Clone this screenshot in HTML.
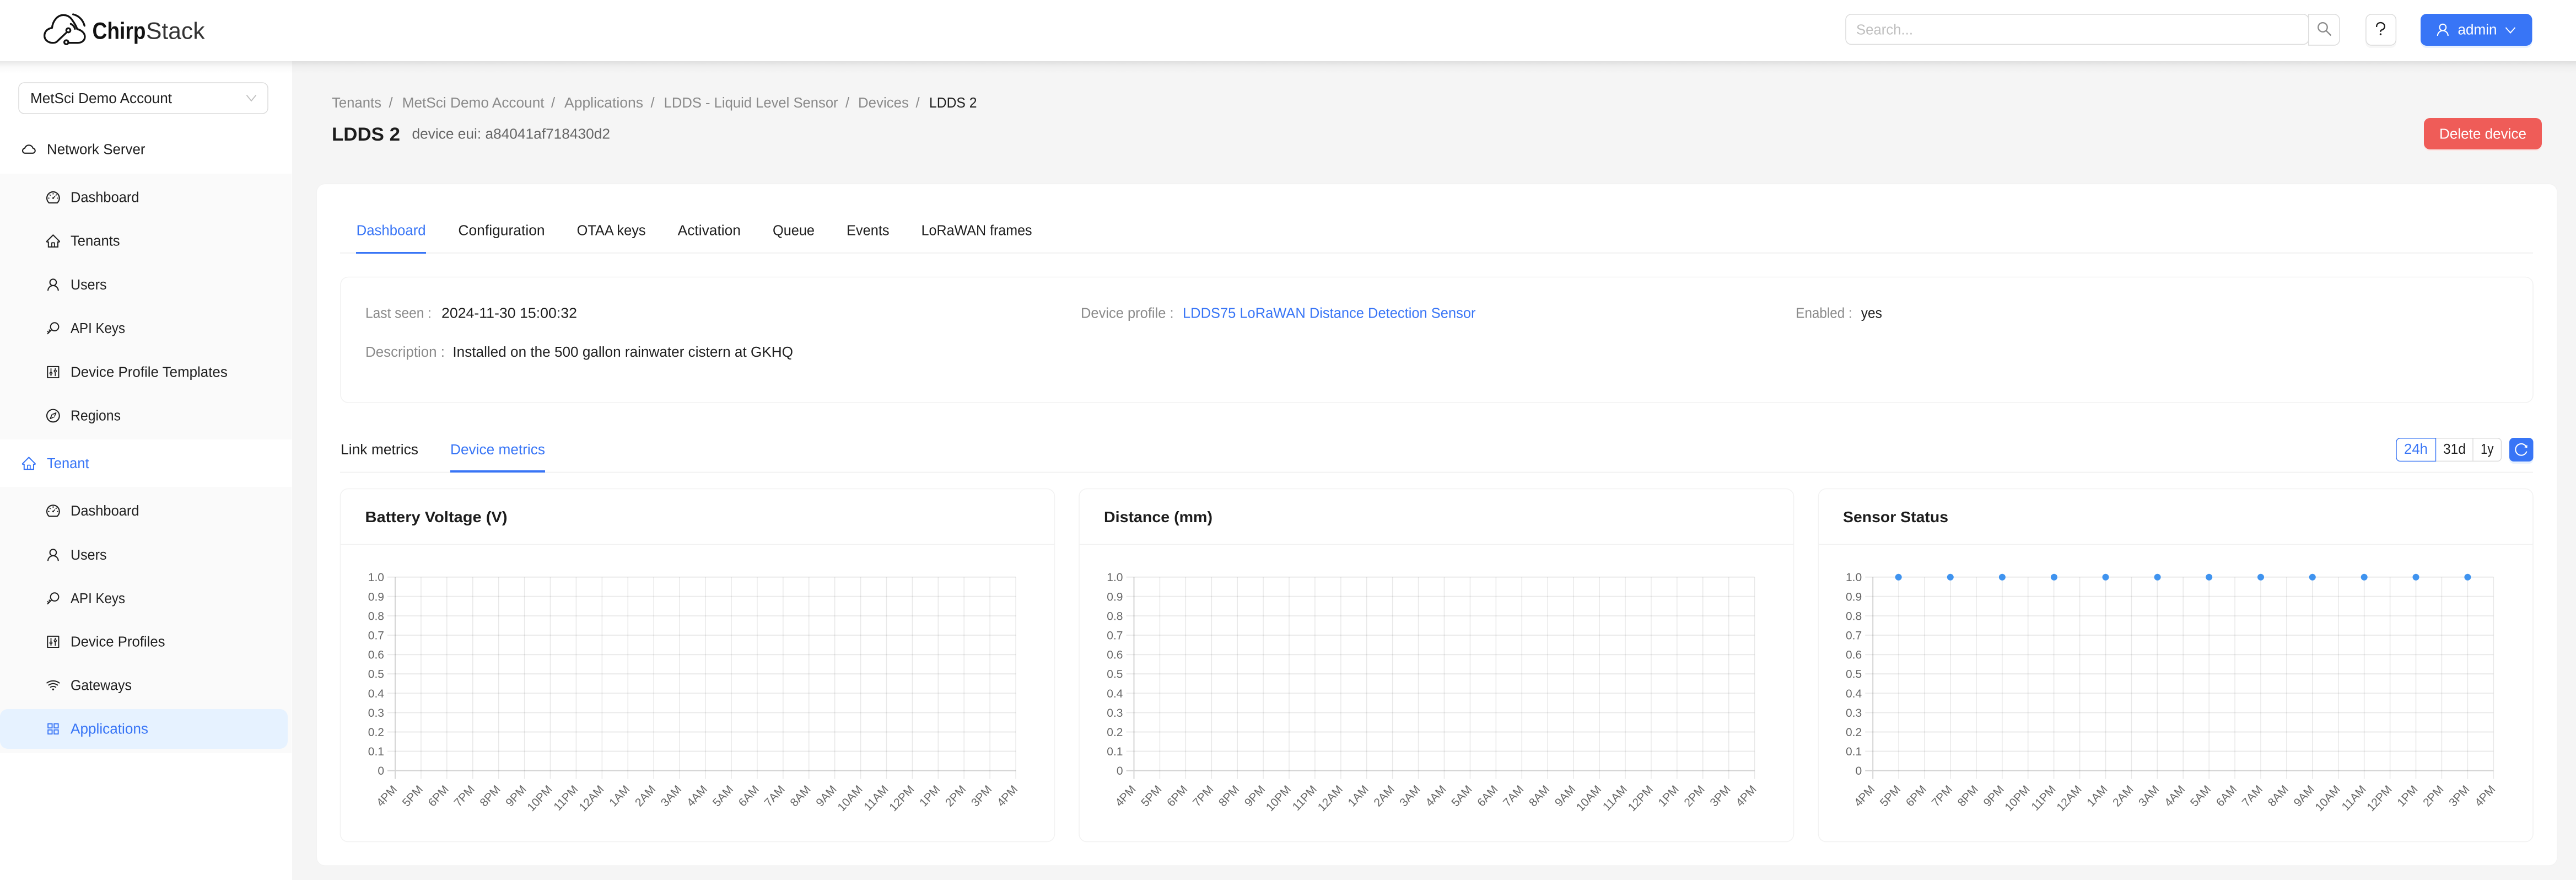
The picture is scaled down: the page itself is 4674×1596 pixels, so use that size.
<!DOCTYPE html>
<html lang="en"><head><meta charset="utf-8"><title>LDDS 2 - ChirpStack</title>
<style>
html,body{margin:0;padding:0;background:#f5f5f5;width:4674px;height:1596px;overflow:hidden}
svg{display:block;font-family:"Liberation Sans",Arial,sans-serif}
text{white-space:pre}
.m{font-size:25.5px;fill:#1f1f1f}
.b{fill:#3875f6}
.g{fill:#8a8a8a}
.d{fill:#1f1f1f}
.t{font-size:25.5px}
.h{font-size:27.5px;font-weight:700;fill:#1c1c1c}
.y{font-size:21px;fill:#666;text-anchor:end}
.x{font-size:21px;fill:#666;text-anchor:end}
</style></head><body>
<svg width="4674" height="1596" viewBox="0 0 4674 1596" xmlns="http://www.w3.org/2000/svg">
<defs>
<linearGradient id="sh" x1="0" y1="0" x2="0" y2="1"><stop offset="0" stop-color="#000" stop-opacity=".09"/><stop offset=".45" stop-color="#000" stop-opacity=".025"/><stop offset="1" stop-color="#000" stop-opacity="0"/></linearGradient>
<path id="i-cloud" d="M811.4 418.7C765.6 297.9 648.9 212 512.2 212S258.8 297.8 213 418.6C127.3 441.1 64 519.1 64 612c0 110.5 89.5 200 199.9 200h496.2C870.5 812 960 722.5 960 612c0-92.7-63.1-170.7-148.6-193.3zm36.3 281a123.07 123.07 0 01-87.6 36.3H263.9c-33.1 0-64.2-12.9-87.6-36.3A123.3 123.3 0 01140 612c0-28 9.1-54.3 26.2-76.3a125.7 125.7 0 0166.1-43.7l37.9-9.9 13.9-36.6c8.6-22.8 20.6-44.1 35.7-63.4a245.6 245.6 0 0152.4-49.9c41.1-28.9 89.5-44.2 140-44.2s98.9 15.3 140 44.2c19.9 14 37.5 30.8 52.4 49.9 15.1 19.3 27.1 40.7 35.7 63.4l13.8 36.5 37.8 10c54.3 14.5 92.1 63.8 92.1 120 0 33.1-12.9 64.3-36.3 87.7z"/>
<path id="i-home" d="M946.5 505L560.1 118.8l-25.9-25.9a31.5 31.5 0 00-44.4 0L77.5 505a63.9 63.9 0 00-18.8 46c.4 35.2 29.7 63.3 64.9 63.3h42.5V940h691.8V614.3h43.4c17.1 0 33.2-6.7 45.3-18.8a63.6 63.6 0 0018.7-45.3c0-17-6.7-33.1-18.8-45.2zM568 868H456V664h112v204zm217.9-325.7V868H632V640c0-22.1-17.9-40-40-40H432c-22.1 0-40 17.9-40 40v228H238.1V542.3h-96l370-369.7 23.1 23.1L882 542.3h-96.1z"/>
<path id="i-user" d="M858.5 763.6a374 374 0 00-80.6-119.5 375.63 375.63 0 00-119.5-80.6c-.4-.2-.8-.3-1.2-.5C719.5 518 760 444.7 760 362c0-137-111-248-248-248S264 225 264 362c0 82.7 40.5 156 102.8 201.1-.4.2-.8.3-1.2.5-44.8 18.9-85 46-119.5 80.6a375.63 375.63 0 00-80.6 119.5A371.7 371.7 0 00136 901.8a8 8 0 008 8.2h60c4.4 0 7.9-3.5 8-7.8 2-77.2 33-149.5 87.8-204.3 56.7-56.7 132-87.9 212.2-87.9s155.5 31.2 212.2 87.9C779 752.7 810 825 812 902.2c.1 4.4 3.6 7.8 8 7.8h60a8 8 0 008-8.2c-1-47.8-10.9-94.3-29.5-138.2zM512 534c-45.9 0-89.1-17.9-121.6-50.4S340 407.9 340 362c0-45.9 17.9-89.1 50.4-121.6S466.1 190 512 190s89.1 17.9 121.6 50.4S684 316.1 684 362c0 45.9-17.9 89.1-50.4 121.6S557.9 534 512 534z"/>
<path id="i-dash" d="M924.8 385.6a446.7 446.7 0 00-96-142.4 446.7 446.7 0 00-142.4-96C631.1 123.8 572.5 112 512 112s-119.1 11.8-174.4 35.2a446.7 446.7 0 00-142.4 96 446.7 446.7 0 00-96 142.4C75.8 440.9 64 499.5 64 560c0 132.7 58.3 257.7 159.9 343.1l1.7 1.4c5.8 4.8 13.1 7.5 20.6 7.5h531.7c7.5 0 14.8-2.7 20.6-7.5l1.7-1.4C901.7 817.7 960 692.7 960 560c0-60.5-11.9-119.1-35.2-174.4zM761.4 836H262.6A371.12 371.12 0 01140 560c0-99.4 38.7-192.8 109-263 70.3-70.3 163.7-109 263-109 99.4 0 192.8 38.7 263 109 70.3 70.3 109 163.7 109 263 0 105.6-44.5 205.5-122.6 276zM623.5 421.5a8.03 8.03 0 00-11.3 0L527.7 506c-18.7-5-39.4-.2-54.1 14.5a55.95 55.95 0 000 79.2 55.95 55.95 0 0079.2 0 55.87 55.87 0 0014.5-54.1l84.5-84.5c3.1-3.1 3.1-8.2 0-11.3l-28.3-28.3zM490 320h44c4.4 0 8-3.6 8-8v-80c0-4.4-3.6-8-8-8h-44c-4.4 0-8 3.6-8 8v80c0 4.4 3.6 8 8 8zm260 218v44c0 4.4 3.6 8 8 8h80c4.4 0 8-3.6 8-8v-44c0-4.4-3.6-8-8-8h-80c-4.4 0-8 3.6-8 8zm12.7-197.2l-31.1-31.1a8.03 8.03 0 00-11.3 0l-56.6 56.6a8.03 8.03 0 000 11.3l31.1 31.1c3.1 3.1 8.2 3.1 11.3 0l56.6-56.6c3.1-3.1 3.1-8.2 0-11.3zm-458.6-31.1a8.03 8.03 0 00-11.3 0l-31.1 31.1a8.03 8.03 0 000 11.3l56.6 56.6c3.1 3.1 8.2 3.1 11.3 0l31.1-31.1c3.1-3.1 3.1-8.2 0-11.3l-56.6-56.6zM262 530h-80c-4.4 0-8 3.6-8 8v44c0 4.4 3.6 8 8 8h80c4.4 0 8-3.6 8-8v-44c0-4.4-3.6-8-8-8z"/>
<path id="i-key" d="M608 112c-167.9 0-304 136.1-304 304 0 70.3 23.9 135 63.9 186.5l-41.1 41.1-62.3-62.3a8.15 8.15 0 00-11.4 0l-39.8 39.8a8.15 8.15 0 000 11.4l62.3 62.3-44.9 44.9-62.3-62.3a8.15 8.15 0 00-11.4 0l-39.8 39.8a8.15 8.15 0 000 11.4l62.3 62.3-65.3 65.3a8.03 8.03 0 000 11.3l42.3 42.3c3.1 3.1 8.2 3.1 11.3 0l253.6-253.6A304.06 304.06 0 00608 720c167.9 0 304-136.1 304-304S775.9 112 608 112zm161.2 465.2C726.2 620.3 668.9 644 608 644c-60.9 0-118.2-23.7-161.2-66.8-43.1-43-66.8-100.3-66.8-161.2 0-60.9 23.7-118.2 66.8-161.2 43-43.1 100.3-66.8 161.2-66.8 60.9 0 118.2 23.7 161.2 66.8 43.1 43 66.8 100.3 66.8 161.2 0 60.9-23.7 118.2-66.8 161.2z"/>
<g id="i-ctrl"><path d="M880 112H144c-17.7 0-32 14.3-32 32v736c0 17.7 14.3 32 32 32h736c17.7 0 32-14.3 32-32V144c0-17.7-14.3-32-32-32zm-40 728H184V184h656v656z"/><path d="M340 264h64v221h-64zM340 683h64v85h-64zM620 256h64v85h-64zM620 539h64v229h-64z"/><circle cx="372" cy="584" r="68" fill="none" stroke="currentColor" stroke-width="64"/><circle cx="652" cy="440" r="68" fill="none" stroke="currentColor" stroke-width="64"/></g>
<path id="i-comp" d="M512 64C264.6 64 64 264.6 64 512s200.6 448 448 448 448-200.6 448-448S759.4 64 512 64zm0 820c-205.4 0-372-166.6-372-372s166.6-372 372-372 372 166.6 372 372-166.6 372-372 372zm198.4-588.1a32 32 0 00-24.5.5L414.9 415 296.4 686c-3.6 8.2-3.6 17.5 0 25.7 3.4 7.8 9.7 13.9 17.7 17 3.8 1.5 7.7 2.2 11.7 2.2 4.4 0 8.7-.9 12.8-2.7l271-118.6 118.5-271a32.06 32.06 0 00-17.7-42.7zM576.8 534.4l26.2 26.2-42.4 42.4-26.2-26.2L380 644.4 447.5 490 422 464.4l42.4-42.4 25.5 25.5L644.4 380l-67.6 154.4z"/>
<path id="i-wifi" d="M723 620.5C666.8 571.6 593.4 542 513 542s-153.8 29.6-210.1 78.6a8.1 8.1 0 00-.8 11.2l36 42.9c2.9 3.4 8 3.8 11.4.9C393.1 637.2 450.3 614 513 614s119.9 23.2 163.5 61.5c3.4 2.9 8.5 2.5 11.4-.9l36-42.9c2.8-3.3 2.4-8.3-.9-11.2zm117.4-140.1C751.7 406.5 637.6 362 513 362s-238.7 44.5-327.5 118.4a8.05 8.05 0 00-1 11.3l36 42.9c2.8 3.4 7.9 3.8 11.2 1C308 472.2 406.1 434 513 434s205 38.2 281.2 101.6c3.4 2.8 8.4 2.4 11.2-1l36-42.9c2.8-3.4 2.4-8.5-1-11.3zm116.7-139C835.7 241.8 680.3 182 511 182c-168.2 0-322.6 59-443.7 157.4a8 8 0 00-1.1 11.4l36 42.9c2.8 3.3 7.8 3.8 11.1 1.1C222 306.7 360.3 254 511 254c151.8 0 291 53.5 400 142.7 3.4 2.8 8.4 2.3 11.2-1.1l36-42.9c2.9-3.4 2.4-8.5-1.1-11.3zM448 778a64 64 0 10128 0 64 64 0 10-128 0z"/>
<path id="i-app" d="M464 144H160c-8.8 0-16 7.2-16 16v304c0 8.8 7.2 16 16 16h304c8.8 0 16-7.2 16-16V160c0-8.8-7.2-16-16-16zm-52 268H212V212h200v200zm452-268H560c-8.8 0-16 7.2-16 16v304c0 8.8 7.2 16 16 16h304c8.8 0 16-7.2 16-16V160c0-8.8-7.2-16-16-16zm-52 268H612V212h200v200zM464 544H160c-8.8 0-16 7.2-16 16v304c0 8.8 7.2 16 16 16h304c8.8 0 16-7.2 16-16V560c0-8.8-7.2-16-16-16zm-52 268H212V612h200v200zm452-268H560c-8.8 0-16 7.2-16 16v304c0 8.8 7.2 16 16 16h304c8.8 0 16-7.2 16-16V560c0-8.8-7.2-16-16-16zm-52 268H612V612h200v200z"/>
<path id="i-search" d="M909.6 854.5L649.9 594.8C690.2 542.7 712 479 712 412c0-80.2-31.3-155.4-87.9-212.1-56.6-56.7-132-87.9-212.1-87.9s-155.5 31.3-212.1 87.9C143.2 256.5 112 331.8 112 412c0 80.1 31.3 155.5 87.9 212.1C256.5 680.8 331.8 712 412 712c67 0 130.6-21.8 182.7-62l259.7 259.6a8.2 8.2 0 0011.6 0l43.6-43.5a8.2 8.2 0 000-11.6zM570.4 570.4C528 612.7 471.8 636 412 636s-116-23.3-158.4-65.6C211.3 528 188 471.8 188 412s23.3-116.1 65.6-158.4C296 211.3 352.2 188 412 188s116.1 23.2 158.4 65.6S636 352.2 636 412s-23.3 116.1-65.6 158.4z"/>
<path id="i-q" d="M764 280.9c-14-30.6-33.9-58.1-59.3-81.6C653.1 151.4 584.6 125 512 125s-141.1 26.4-192.7 74.2c-25.4 23.6-45.3 51-59.3 81.7-14.6 32-22 65.9-22 100.9v27c0 6.2 5 11.2 11.2 11.2h54c6.2 0 11.2-5 11.2-11.2v-27c0-99.5 88.6-180.4 197.6-180.4s197.6 80.9 197.6 180.4c0 40.8-14.5 79.2-42 111.2-27.2 31.7-65.6 54.4-108.1 64-24.3 5.5-46.2 19.2-61.7 38.8a110.85 110.85 0 00-23.9 68.6v31.4c0 6.2 5 11.2 11.2 11.2h54c6.2 0 11.2-5 11.2-11.2v-31.4c0-15.7 10.9-29.5 26-32.9 58.4-13.2 111.4-44.7 149.3-88.7 19.1-22.3 34-47.1 44.3-74 10.7-27.9 16.1-57.2 16.1-87 0-35-7.4-69-22-100.9zM512 787c-30.9 0-56 25.1-56 56s25.1 56 56 56 56-25.1 56-56-25.1-56-56-56z"/>
<path id="i-reload" d="M909.1 209.3l-56.4 44.1C775.8 155.1 656.2 92 521.9 92 290 92 102.3 279.5 102 511.5 101.7 743.7 289.8 932 521.9 932c181.3 0 335.8-115 394.6-276.1 1.5-4.2-.7-8.9-4.9-10.3l-56.7-19.5a8 8 0 00-10.1 4.8c-1.8 5-3.8 10-5.9 14.9-17.3 41-42.1 77.8-73.7 109.4A344.77 344.77 0 01655.9 829c-42.3 17.9-87.4 27-133.8 27-46.5 0-91.5-9.1-133.8-27A341.5 341.5 0 01279 755.2a342.16 342.16 0 01-73.7-109.4c-17.9-42.4-27-87.4-27-133.9s9.1-91.5 27-133.9c17.3-41 42.1-77.8 73.7-109.4 31.6-31.6 68.4-56.4 109.3-73.8 42.3-17.9 87.4-27 133.8-27 46.5 0 91.5 9.1 133.8 27a341.5 341.5 0 01109.3 73.8c9.9 9.9 19.2 20.4 27.8 31.4l-60.2 47a8 8 0 003 14.1l175.6 43c5 1.2 9.9-2.6 9.9-7.7l.8-180.9c-.1-6.6-7.8-10.3-13-6.2z"/>
<g id="grid">
<path fill="none" stroke="#000" stroke-opacity=".085" stroke-width="1.6" d="M46.9 1046.7V1412.7M93.8 1046.7V1412.7M140.8 1046.7V1412.7M187.7 1046.7V1412.7M234.6 1046.7V1412.7M281.5 1046.7V1412.7M328.4 1046.7V1412.7M375.4 1046.7V1412.7M422.3 1046.7V1412.7M469.2 1046.7V1412.7M516.1 1046.7V1412.7M563 1046.7V1412.7M610 1046.7V1412.7M656.9 1046.7V1412.7M703.8 1046.7V1412.7M750.7 1046.7V1412.7M797.6 1046.7V1412.7M844.6 1046.7V1412.7M891.5 1046.7V1412.7M938.4 1046.7V1412.7M985.3 1046.7V1412.7M1032.2 1046.7V1412.7M1079.2 1046.7V1412.7M1126.1 1046.7V1412.7"/>
<path fill="none" stroke="#000" stroke-opacity=".075" stroke-width="2.2" d="M-14 1046.7H1126.1M-14 1081.8H1126.1M-14 1116.9H1126.1M-14 1152H1126.1M-14 1187.1H1126.1M-14 1222.2H1126.1M-14 1257.3H1126.1M-14 1292.4H1126.1M-14 1327.5H1126.1M-14 1362.6H1126.1"/>
<path fill="none" stroke="#000" stroke-opacity=".17" stroke-width="2" d="M0 1046.7V1412.7M-14 1397.7H1126.1"/>
</g>
</defs>

<rect width="4674" height="1596" fill="#f5f5f5"/>

<!-- sidebar -->
<rect x="0" y="111" width="530" height="1485" fill="#fff"/>
<rect x="0" y="315" width="529" height="482" fill="#fafafa"/>
<rect x="0" y="883" width="529" height="483" fill="#fafafa"/>
<rect x="0" y="1286" width="522" height="72" rx="14" fill="#e6f2ff"/>

<!-- header -->
<rect x="0" y="111" width="4674" height="22" fill="url(#sh)"/>
<rect x="0" y="0" width="4674" height="111" fill="#fff"/>

<!-- logo -->
<g transform="translate(60 10) scale(.33333)" fill="none" stroke="#111" stroke-width="10" stroke-linecap="round" stroke-linejoin="round">
<path d="M181 148L128 198Q122 203 108 203C80 203 62 185 62 165C62 140 80 125 103 122C108 80 135 52 165 52C190 52 205 65 215 82C228 100 236 115 240 128C265 135 282 150 282 170C282 190 265 203 245 203H193"/>
<path d="M218 48C250 55 272 80 280 110"/>
<path d="M205 100C217 105 225 115 228 127"/>
<circle cx="192" cy="135" r="11"/>
<circle cx="181" cy="200" r="11"/>
</g>
<text x="167.5" y="70.7" font-size="43" font-weight="700" fill="#111" textLength="97" lengthAdjust="spacingAndGlyphs">Chirp</text>
<text x="265" y="70.7" font-size="43" fill="#333" textLength="106.5" lengthAdjust="spacingAndGlyphs">Stack</text>

<!-- header right -->
<rect x="3349" y="26" width="840" height="54.5" rx="10" fill="#fff" stroke="#dcdcdc" stroke-width="1.5"/>
<path d="M4188.7 26H4235a10 10 0 0 1 10 10V72a10 10 0 0 1-10 10H4188.7Z" fill="#fff" stroke="#dcdcdc" stroke-width="1.5"/>
<text x="3368" y="62.3" class="t" fill="#bfbfbf" textLength="103" lengthAdjust="spacingAndGlyphs">Search...</text>
<g transform="translate(4201.5 36.5) scale(.0315)" fill="#8c8c8c"><use href="#i-search"/></g>
<rect x="4292" y="29" width="56" height="58" rx="10" fill="#f7f7f7"/>
<rect x="4292.9" y="26" width="54.5" height="56" rx="10" fill="#fff" stroke="#dcdcdc" stroke-width="1.5"/>
<g transform="translate(4303.6 36) scale(.031)" fill="#1f1f1f"><use href="#i-q"/></g>
<rect x="4392" y="29" width="202.5" height="58" rx="11" fill="#e8f1fe"/>
<rect x="4392" y="25" width="202.5" height="58" rx="11" fill="#3875f6"/>
<g transform="translate(4418 39.5) scale(.028)" fill="#fff"><use href="#i-user"/></g>
<text x="4459.5" y="62.5" class="t" fill="#fff" textLength="71" lengthAdjust="spacingAndGlyphs">admin</text>
<path d="M4546.5 50L4555 59.5L4563.5 50" fill="none" stroke="#fff" stroke-width="2"/>

<!-- tenant select -->
<rect x="34" y="150" width="452" height="56" rx="10" fill="#fff" stroke="#dcdcdc" stroke-width="1.5"/>
<text x="55" y="187" class="m" textLength="257" lengthAdjust="spacingAndGlyphs">MetSci Demo Account</text>
<path d="M447.5 172.5L456 183L464.5 172.5" fill="none" stroke="#bfbfbf" stroke-width="1.8"/>

<!-- menu -->
<g fill="#1f1f1f">
<g transform="translate(38.2 256.4) scale(.0277)"><use href="#i-cloud"/></g>
<g transform="translate(82.2 343.8) scale(.0277)"><use href="#i-dash"/></g>
<g transform="translate(82.2 422.8) scale(.0277)"><use href="#i-home"/></g>
<g transform="translate(82.2 502.1) scale(.0277)"><use href="#i-user"/></g>
<g transform="translate(82.2 581.1) scale(.0277)"><use href="#i-key"/></g>
<g transform="translate(82.2 660.8) scale(.0277)" color="#1f1f1f"><use href="#i-ctrl"/></g>
<g transform="translate(82.2 739.8) scale(.0277)"><use href="#i-comp"/></g>
<g transform="translate(82.2 912.1) scale(.0277)"><use href="#i-dash"/></g>
<g transform="translate(82.2 992.1) scale(.0277)"><use href="#i-user"/></g>
<g transform="translate(82.2 1071.1) scale(.0277)"><use href="#i-key"/></g>
<g transform="translate(82.2 1149.8) scale(.0277)" color="#1f1f1f"><use href="#i-ctrl"/></g>
<g transform="translate(82.2 1228.8) scale(.0277)"><use href="#i-wifi"/></g>
</g>
<g fill="#3875f6">
<g transform="translate(38.2 826.1) scale(.0277)"><use href="#i-home"/></g>
<g transform="translate(82.2 1307.8) scale(.0277)"><use href="#i-app"/></g>
</g>
<text x="85" y="279.3" class="m" textLength="178.5" lengthAdjust="spacingAndGlyphs">Network Server</text>
<text x="128" y="366.7" class="m" textLength="124.5" lengthAdjust="spacingAndGlyphs">Dashboard</text>
<text x="128" y="445.7" class="m" textLength="89.6" lengthAdjust="spacingAndGlyphs">Tenants</text>
<text x="128" y="525" class="m" textLength="65.5" lengthAdjust="spacingAndGlyphs">Users</text>
<text x="128" y="604" class="m" textLength="99" lengthAdjust="spacingAndGlyphs">API Keys</text>
<text x="128" y="683.7" class="m" textLength="284.8" lengthAdjust="spacingAndGlyphs">Device Profile Templates</text>
<text x="128" y="762.7" class="m" textLength="91" lengthAdjust="spacingAndGlyphs">Regions</text>
<text x="85" y="849" class="m" style="fill:#3875f6" textLength="76.6" lengthAdjust="spacingAndGlyphs">Tenant</text>
<text x="128" y="935" class="m" textLength="124.5" lengthAdjust="spacingAndGlyphs">Dashboard</text>
<text x="128" y="1015" class="m" textLength="65.5" lengthAdjust="spacingAndGlyphs">Users</text>
<text x="128" y="1094" class="m" textLength="99" lengthAdjust="spacingAndGlyphs">API Keys</text>
<text x="128" y="1172.7" class="m" textLength="171.5" lengthAdjust="spacingAndGlyphs">Device Profiles</text>
<text x="128" y="1251.7" class="m" textLength="111" lengthAdjust="spacingAndGlyphs">Gateways</text>
<text x="128" y="1330.7" class="m" style="fill:#3875f6" textLength="141" lengthAdjust="spacingAndGlyphs">Applications</text>

<!-- breadcrumb -->
<g class="t">
<text x="602" y="195" font-size="25.5" class="g" textLength="90" lengthAdjust="spacingAndGlyphs">Tenants</text>
<text x="705.5" y="195" font-size="25.5" class="g">/</text>
<text x="729.6" y="195" font-size="25.5" class="g" textLength="258" lengthAdjust="spacingAndGlyphs">MetSci Demo Account</text>
<text x="1000" y="195" font-size="25.5" class="g">/</text>
<text x="1024" y="195" font-size="25.5" class="g" textLength="143" lengthAdjust="spacingAndGlyphs">Applications</text>
<text x="1180.5" y="195" font-size="25.5" class="g">/</text>
<text x="1204.6" y="195" font-size="25.5" class="g" textLength="316" lengthAdjust="spacingAndGlyphs">LDDS - Liquid Level Sensor</text>
<text x="1534" y="195" font-size="25.5" class="g">/</text>
<text x="1557" y="195" font-size="25.5" class="g" textLength="92" lengthAdjust="spacingAndGlyphs">Devices</text>
<text x="1661.5" y="195" font-size="25.5" class="g">/</text>
<text x="1686" y="195" font-size="25.5" class="d" textLength="86.5" lengthAdjust="spacingAndGlyphs">LDDS 2</text>
</g>
<text x="602" y="255" font-size="34" font-weight="700" fill="#1c1c1c" textLength="124" lengthAdjust="spacingAndGlyphs">LDDS 2</text>
<text x="747.5" y="251.7" class="t" fill="#666" textLength="359.5" lengthAdjust="spacingAndGlyphs">device eui: a84041af718430d2</text>
<rect x="4398" y="217" width="214" height="57" rx="11" fill="#fbe9e8"/>
<rect x="4398" y="214" width="214" height="57" rx="11" fill="#ef5c58"/>
<text x="4426" y="251.7" class="t" fill="#fff" textLength="158" lengthAdjust="spacingAndGlyphs">Delete device</text>

<!-- main card -->
<rect x="574.5" y="333.5" width="4065.5" height="1236.5" rx="15" fill="#fff" stroke="#f2f2f2" stroke-width="1.2"/>

<!-- tabs -->
<path d="M617 458.8H4596" stroke="#f0f0f0" stroke-width="1.8"/>
<rect x="646" y="457" width="127" height="3.2" fill="#3875f6"/>
<text x="646.6" y="426.7" class="t b" textLength="126" lengthAdjust="spacingAndGlyphs">Dashboard</text>
<text x="831.4" y="426.7" class="t d" textLength="157.2" lengthAdjust="spacingAndGlyphs">Configuration</text>
<text x="1046.6" y="426.7" class="t d" textLength="125" lengthAdjust="spacingAndGlyphs">OTAA keys</text>
<text x="1229.6" y="426.7" class="t d" textLength="114.4" lengthAdjust="spacingAndGlyphs">Activation</text>
<text x="1402" y="426.7" class="t d" textLength="76" lengthAdjust="spacingAndGlyphs">Queue</text>
<text x="1536" y="426.7" class="t d" textLength="77.6" lengthAdjust="spacingAndGlyphs">Events</text>
<text x="1671.6" y="426.7" class="t d" textLength="201" lengthAdjust="spacingAndGlyphs">LoRaWAN frames</text>

<!-- description card -->
<rect x="618" y="502.5" width="3978" height="227.5" rx="14" fill="#fff" stroke="#f2f2f2" stroke-width="1.6"/>
<text x="663" y="576.7" class="t g" textLength="120" lengthAdjust="spacingAndGlyphs">Last seen :</text>
<text x="801" y="576.7" class="t d" textLength="246" lengthAdjust="spacingAndGlyphs">2024-11-30 15:00:32</text>
<text x="1961" y="576.7" class="t g" textLength="168.6" lengthAdjust="spacingAndGlyphs">Device profile :</text>
<text x="2146" y="576.7" class="t b" textLength="531.5" lengthAdjust="spacingAndGlyphs">LDDS75 LoRaWAN Distance Detection Sensor</text>
<text x="3258.3" y="576.7" class="t g" textLength="102.4" lengthAdjust="spacingAndGlyphs">Enabled :</text>
<text x="3376.7" y="576.7" class="t d" textLength="38.3" lengthAdjust="spacingAndGlyphs">yes</text>
<text x="663" y="647" class="t g" textLength="144" lengthAdjust="spacingAndGlyphs">Description :</text>
<text x="821.4" y="647" class="t d" textLength="617.6" lengthAdjust="spacingAndGlyphs">Installed on the 500 gallon rainwater cistern at GKHQ</text>

<!-- metric tabs -->
<path d="M617 856.5H4596" stroke="#f0f0f0" stroke-width="1.8"/>
<rect x="817" y="853" width="172" height="4" fill="#3875f6"/>
<text x="618" y="824" class="t d" textLength="141" lengthAdjust="spacingAndGlyphs">Link metrics</text>
<text x="817" y="824" class="t b" textLength="172" lengthAdjust="spacingAndGlyphs">Device metrics</text>
<rect x="4347.8" y="794.8" width="190.7" height="41.6" rx="7" fill="#fff" stroke="#dcdcdc" stroke-width="1.5"/>
<path d="M4487 795V836" stroke="#dcdcdc" stroke-width="1.5"/>
<path d="M4419.5 794.8H4355a7 7 0 0 0-7 7V829.4a7 7 0 0 0 7 7H4419.5Z" fill="#fff" stroke="#3875f6" stroke-width="1.4"/>
<text x="4362" y="823" class="t b" textLength="43" lengthAdjust="spacingAndGlyphs">24h</text>
<text x="4433" y="823" class="t d" textLength="41" lengthAdjust="spacingAndGlyphs">31d</text>
<text x="4501" y="823" class="t d" textLength="23.5" lengthAdjust="spacingAndGlyphs">1y</text>
<rect x="4553" y="798" width="43.5" height="43" rx="8" fill="#e8f1fe"/>
<rect x="4553" y="794" width="43.5" height="43" rx="8" fill="#3875f6"/>
<g transform="translate(4560.5 801.4) scale(.0272)" fill="#fff"><use href="#i-reload"/></g>

<!-- chart cards -->
<rect x="617.5" y="886.5" width="1296" height="640" rx="14" fill="#fff" stroke="#f2f2f2" stroke-width="1.6"/>
<rect x="1958" y="886.5" width="1296.5" height="640" rx="14" fill="#fff" stroke="#f2f2f2" stroke-width="1.6"/>
<rect x="3299.5" y="886.5" width="1296.5" height="640" rx="14" fill="#fff" stroke="#f2f2f2" stroke-width="1.6"/>
<path d="M617.5 987.3H1913.5M1958 987.3H3254.5M3299.5 987.3H4596" stroke="#f2f2f2" stroke-width="1.6"/>
<text x="662.5" y="947" class="h" textLength="258" lengthAdjust="spacingAndGlyphs">Battery Voltage (V)</text>
<text x="2003" y="947" class="h" textLength="197" lengthAdjust="spacingAndGlyphs">Distance (mm)</text>
<text x="3344" y="947" class="h" textLength="191" lengthAdjust="spacingAndGlyphs">Sensor Status</text>

<!-- chart 1 -->
<g transform="translate(717 0)">
<use href="#grid"/>
<text class="y" x="-20" y="1054.2">1.0</text><text class="y" x="-20" y="1089.3">0.9</text><text class="y" x="-20" y="1124.4">0.8</text><text class="y" x="-20" y="1159.5">0.7</text><text class="y" x="-20" y="1194.6">0.6</text><text class="y" x="-20" y="1229.7">0.5</text><text class="y" x="-20" y="1264.8">0.4</text><text class="y" x="-20" y="1299.9">0.3</text><text class="y" x="-20" y="1335">0.2</text><text class="y" x="-20" y="1370.1">0.1</text><text class="y" x="-20" y="1405.2">0</text>
<text class="x" transform="translate(4.4 1432.5) rotate(-47)">4PM</text><text class="x" transform="translate(51.3 1432.5) rotate(-47)">5PM</text><text class="x" transform="translate(98.2 1432.5) rotate(-47)">6PM</text><text class="x" transform="translate(145.2 1432.5) rotate(-47)">7PM</text><text class="x" transform="translate(192.1 1432.5) rotate(-47)">8PM</text><text class="x" transform="translate(239 1432.5) rotate(-47)">9PM</text><text class="x" transform="translate(285.9 1432.5) rotate(-47)">10PM</text><text class="x" transform="translate(332.8 1432.5) rotate(-47)">11PM</text><text class="x" transform="translate(379.8 1432.5) rotate(-47)">12AM</text><text class="x" transform="translate(426.7 1432.5) rotate(-47)">1AM</text><text class="x" transform="translate(473.6 1432.5) rotate(-47)">2AM</text><text class="x" transform="translate(520.5 1432.5) rotate(-47)">3AM</text><text class="x" transform="translate(567.4 1432.5) rotate(-47)">4AM</text><text class="x" transform="translate(614.4 1432.5) rotate(-47)">5AM</text><text class="x" transform="translate(661.3 1432.5) rotate(-47)">6AM</text><text class="x" transform="translate(708.2 1432.5) rotate(-47)">7AM</text><text class="x" transform="translate(755.1 1432.5) rotate(-47)">8AM</text><text class="x" transform="translate(802 1432.5) rotate(-47)">9AM</text><text class="x" transform="translate(849 1432.5) rotate(-47)">10AM</text><text class="x" transform="translate(895.9 1432.5) rotate(-47)">11AM</text><text class="x" transform="translate(942.8 1432.5) rotate(-47)">12PM</text><text class="x" transform="translate(989.7 1432.5) rotate(-47)">1PM</text><text class="x" transform="translate(1036.6 1432.5) rotate(-47)">2PM</text><text class="x" transform="translate(1083.6 1432.5) rotate(-47)">3PM</text><text class="x" transform="translate(1130.5 1432.5) rotate(-47)">4PM</text>
</g>
<!-- chart 2 -->
<g transform="translate(2057.5 0)">
<use href="#grid"/>
<text class="y" x="-20" y="1054.2">1.0</text><text class="y" x="-20" y="1089.3">0.9</text><text class="y" x="-20" y="1124.4">0.8</text><text class="y" x="-20" y="1159.5">0.7</text><text class="y" x="-20" y="1194.6">0.6</text><text class="y" x="-20" y="1229.7">0.5</text><text class="y" x="-20" y="1264.8">0.4</text><text class="y" x="-20" y="1299.9">0.3</text><text class="y" x="-20" y="1335">0.2</text><text class="y" x="-20" y="1370.1">0.1</text><text class="y" x="-20" y="1405.2">0</text>
<text class="x" transform="translate(4.4 1432.5) rotate(-47)">4PM</text><text class="x" transform="translate(51.3 1432.5) rotate(-47)">5PM</text><text class="x" transform="translate(98.2 1432.5) rotate(-47)">6PM</text><text class="x" transform="translate(145.2 1432.5) rotate(-47)">7PM</text><text class="x" transform="translate(192.1 1432.5) rotate(-47)">8PM</text><text class="x" transform="translate(239 1432.5) rotate(-47)">9PM</text><text class="x" transform="translate(285.9 1432.5) rotate(-47)">10PM</text><text class="x" transform="translate(332.8 1432.5) rotate(-47)">11PM</text><text class="x" transform="translate(379.8 1432.5) rotate(-47)">12AM</text><text class="x" transform="translate(426.7 1432.5) rotate(-47)">1AM</text><text class="x" transform="translate(473.6 1432.5) rotate(-47)">2AM</text><text class="x" transform="translate(520.5 1432.5) rotate(-47)">3AM</text><text class="x" transform="translate(567.4 1432.5) rotate(-47)">4AM</text><text class="x" transform="translate(614.4 1432.5) rotate(-47)">5AM</text><text class="x" transform="translate(661.3 1432.5) rotate(-47)">6AM</text><text class="x" transform="translate(708.2 1432.5) rotate(-47)">7AM</text><text class="x" transform="translate(755.1 1432.5) rotate(-47)">8AM</text><text class="x" transform="translate(802 1432.5) rotate(-47)">9AM</text><text class="x" transform="translate(849 1432.5) rotate(-47)">10AM</text><text class="x" transform="translate(895.9 1432.5) rotate(-47)">11AM</text><text class="x" transform="translate(942.8 1432.5) rotate(-47)">12PM</text><text class="x" transform="translate(989.7 1432.5) rotate(-47)">1PM</text><text class="x" transform="translate(1036.6 1432.5) rotate(-47)">2PM</text><text class="x" transform="translate(1083.6 1432.5) rotate(-47)">3PM</text><text class="x" transform="translate(1130.5 1432.5) rotate(-47)">4PM</text>
</g>
<!-- chart 3 -->
<g transform="translate(3398.2 0)">
<use href="#grid"/>
<text class="y" x="-20" y="1054.2">1.0</text><text class="y" x="-20" y="1089.3">0.9</text><text class="y" x="-20" y="1124.4">0.8</text><text class="y" x="-20" y="1159.5">0.7</text><text class="y" x="-20" y="1194.6">0.6</text><text class="y" x="-20" y="1229.7">0.5</text><text class="y" x="-20" y="1264.8">0.4</text><text class="y" x="-20" y="1299.9">0.3</text><text class="y" x="-20" y="1335">0.2</text><text class="y" x="-20" y="1370.1">0.1</text><text class="y" x="-20" y="1405.2">0</text>
<text class="x" transform="translate(4.4 1432.5) rotate(-47)">4PM</text><text class="x" transform="translate(51.3 1432.5) rotate(-47)">5PM</text><text class="x" transform="translate(98.2 1432.5) rotate(-47)">6PM</text><text class="x" transform="translate(145.2 1432.5) rotate(-47)">7PM</text><text class="x" transform="translate(192.1 1432.5) rotate(-47)">8PM</text><text class="x" transform="translate(239 1432.5) rotate(-47)">9PM</text><text class="x" transform="translate(285.9 1432.5) rotate(-47)">10PM</text><text class="x" transform="translate(332.8 1432.5) rotate(-47)">11PM</text><text class="x" transform="translate(379.8 1432.5) rotate(-47)">12AM</text><text class="x" transform="translate(426.7 1432.5) rotate(-47)">1AM</text><text class="x" transform="translate(473.6 1432.5) rotate(-47)">2AM</text><text class="x" transform="translate(520.5 1432.5) rotate(-47)">3AM</text><text class="x" transform="translate(567.4 1432.5) rotate(-47)">4AM</text><text class="x" transform="translate(614.4 1432.5) rotate(-47)">5AM</text><text class="x" transform="translate(661.3 1432.5) rotate(-47)">6AM</text><text class="x" transform="translate(708.2 1432.5) rotate(-47)">7AM</text><text class="x" transform="translate(755.1 1432.5) rotate(-47)">8AM</text><text class="x" transform="translate(802 1432.5) rotate(-47)">9AM</text><text class="x" transform="translate(849 1432.5) rotate(-47)">10AM</text><text class="x" transform="translate(895.9 1432.5) rotate(-47)">11AM</text><text class="x" transform="translate(942.8 1432.5) rotate(-47)">12PM</text><text class="x" transform="translate(989.7 1432.5) rotate(-47)">1PM</text><text class="x" transform="translate(1036.6 1432.5) rotate(-47)">2PM</text><text class="x" transform="translate(1083.6 1432.5) rotate(-47)">3PM</text><text class="x" transform="translate(1130.5 1432.5) rotate(-47)">4PM</text>
<g fill="#3f93ef"><circle cx="46.5" cy="1046.7" r="6"/><circle cx="140.6" cy="1046.7" r="6"/><circle cx="234.7" cy="1046.7" r="6"/><circle cx="328.8" cy="1046.7" r="6"/><circle cx="422.3" cy="1046.7" r="6"/><circle cx="516.4" cy="1046.7" r="6"/><circle cx="610" cy="1046.7" r="6"/><circle cx="703.8" cy="1046.7" r="6"/><circle cx="797.6" cy="1046.7" r="6"/><circle cx="891.5" cy="1046.7" r="6"/><circle cx="985.3" cy="1046.7" r="6"/><circle cx="1079.2" cy="1046.7" r="6"/></g>
</g>
</svg>
</body></html>
